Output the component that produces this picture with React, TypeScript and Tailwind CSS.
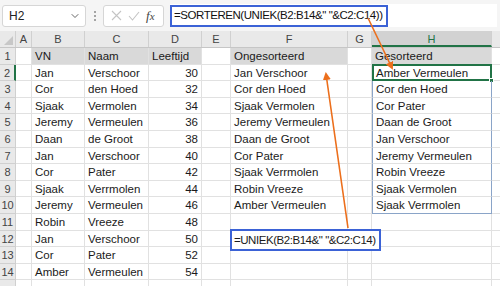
import { ChevronDown } from "lucide-react";

type Row = { vn: string; naam: string; age: number; f?: string; h?: string };

const rows: Row[] = [
  { vn: "Jan", naam: "Verschoor", age: 30, f: "Jan Verschoor", h: "Amber Vermeulen" },
  { vn: "Cor", naam: "den Hoed", age: 32, f: "Cor den Hoed", h: "Cor den Hoed" },
  { vn: "Sjaak", naam: "Vermolen", age: 34, f: "Sjaak Vermolen", h: "Cor Pater" },
  { vn: "Jeremy", naam: "Vermeulen", age: 36, f: "Jeremy Vermeulen", h: "Daan de Groot" },
  { vn: "Daan", naam: "de Groot", age: 38, f: "Daan de Groot", h: "Jan Verschoor" },
  { vn: "Jan", naam: "Verschoor", age: 40, f: "Cor Pater", h: "Jeremy Vermeulen" },
  { vn: "Cor", naam: "Pater", age: 42, f: "Sjaak Verrmolen", h: "Robin Vreeze" },
  { vn: "Sjaak", naam: "Verrmolen", age: 44, f: "Robin Vreeze", h: "Sjaak Vermolen" },
  { vn: "Jeremy", naam: "Vermeulen", age: 46, f: "Amber Vermeulen", h: "Sjaak Verrmolen" },
  { vn: "Robin", naam: "Vreeze", age: 48 },
  { vn: "Jan", naam: "Verschoor", age: 50 },
  { vn: "Cor", naam: "Pater", age: 52 },
  { vn: "Amber", naam: "Vermeulen", age: 54 },
];

const cols = [
  { key: "A", w: "w-[16px]" },
  { key: "B", w: "w-[53px]" },
  { key: "C", w: "w-[64px]" },
  { key: "D", w: "w-[53px]" },
  { key: "E", w: "w-[29px]" },
  { key: "F", w: "w-[117px]" },
  { key: "G", w: "w-[24px]" },
  { key: "H", w: "w-[120px]" },
];

const cell = "h-[16.6px] shrink-0 border-r border-b border-[#e1e1e1] px-[3px] leading-[16px] whitespace-nowrap";
const rowHead = "h-[16.6px] w-[16px] shrink-0 border-b border-[#d0d0d0] bg-[#e9e9e9] text-center text-[11px] leading-[16px] text-[#444]";

const FormulaBar = () => (
  <div className="flex h-[31px] items-center bg-[#f5f5f5] pl-[2px] pr-[3px]">
    <div className="flex h-[22px] w-[84px] items-center justify-between rounded-[3px] border border-[#d6d6d6] bg-white pl-[6px] pr-[4px] text-[12px] text-[#222]">
      <span>H2</span>
      <ChevronDown className="h-[12px] w-[12px] text-[#555]" strokeWidth={1.8} />
    </div>
    <div className="flex w-[17px] flex-col items-center gap-[2px]">
      <span className="h-[2px] w-[2px] rounded-full bg-[#888]" />
      <span className="h-[2px] w-[2px] rounded-full bg-[#888]" />
      <span className="h-[2px] w-[2px] rounded-full bg-[#888]" />
    </div>
    <div className="flex h-[22px] w-[61px] items-center gap-[6px] rounded-[3px] border border-[#d6d6d6] bg-white pl-[7px]">
      <svg width="11" height="11" viewBox="0 0 11 11">
        <path d="M1 1 L10 10 M10 1 L1 10" stroke="#c4c4c4" strokeWidth="1.1" fill="none" />
      </svg>
      <svg width="12" height="10" viewBox="0 0 12 10">
        <path d="M1 5 L4.5 9 L11 1" stroke="#c4c4c4" strokeWidth="1.1" fill="none" />
      </svg>
      <span className="font-['Liberation_Serif',serif] text-[13px] italic text-[#444]">
        f<span className="text-[11px]">x</span>
      </span>
    </div>
    <div className="ml-[6px] flex h-[23px] flex-1 items-center bg-white">
      <div className="flex h-[22px] items-center border-2 border-[#3b62d6] pl-[2px] pr-[3px] text-[11.5px] tracking-[-0.45px] text-[#111]">
        =SORTEREN(UNIEK(B2:B14&amp;" "&amp;C2:C14))
      </div>
    </div>
  </div>
);

const Sheet = () => (
  <div className="flex flex-col bg-white text-[11.5px] text-[#1a1a1a]">
    {/* column letters */}
    <div className="flex h-[17px] border-b border-[#c6c6c6] bg-[#e9e9e9] text-[11px] text-[#444]">
      <div className="relative w-[16px] shrink-0 border-r border-[#d0d0d0]">
        <svg className="absolute bottom-[2px] right-[2px]" width="9" height="9" viewBox="0 0 9 9">
          <path d="M9 0 L9 9 L0 9 Z" fill="#c7c7c7" />
        </svg>
      </div>
      {cols.map((c) => (
        <div
          key={c.key}
          className={`${c.w} shrink-0 border-r border-[#d0d0d0] text-center leading-[16px] ${
            c.key === "H" ? "border-b-2 border-b-[#217346] bg-[#d2d2d2] text-[#217346]" : ""
          }`}
        >
          {c.key}
        </div>
      ))}
      <div className="flex-1" />
    </div>

    {/* header row 1 */}
    <div className="flex">
      <div className={`${rowHead} border-r`}>1</div>
      <div className={`${cell} w-[16px]`} />
      <div className={`${cell} w-[53px] bg-[#d9d9d9]`}>VN</div>
      <div className={`${cell} w-[64px] bg-[#d9d9d9]`}>Naam</div>
      <div className={`${cell} w-[53px] bg-[#d9d9d9]`}>Leeftijd</div>
      <div className={`${cell} w-[29px]`} />
      <div className={`${cell} w-[117px] bg-[#d9d9d9]`}>Ongesorteerd</div>
      <div className={`${cell} w-[24px]`} />
      <div className={`${cell} w-[120px] bg-[#d9d9d9]`}>Gesorteerd</div>
      <div className={`${cell} flex-1 border-r-0`} />
    </div>

    {rows.map((r, i) => {
      const n = i + 2;
      const inSpill = !!r.h;
      const first = n === 2;
      const last = n === 10;
      return (
        <div key={n} className="flex">
          <div className={`${rowHead} ${first ? "border-r-2 border-r-[#217346] bg-[#d2d2d2]" : "border-r"}`}>
            {n}
          </div>
          <div className={`${cell} w-[16px]`} />
          <div className={`${cell} w-[53px]`}>{r.vn}</div>
          <div className={`${cell} w-[64px]`}>{r.naam}</div>
          <div className={`${cell} w-[53px] text-right`}>{r.age}</div>
          <div className={`${cell} w-[29px]`} />
          <div className={`${cell} relative w-[117px]`}>
            {r.f}
            {n === 12 && (
              <div className="absolute left-[-1px] top-[-2px] z-10 flex h-[22px] items-center border-2 border-[#3b62d6] bg-white pl-[2px] pr-[3px] tracking-[-0.45px]">
                =UNIEK(B2:B14&amp;" "&amp;C2:C14)
              </div>
            )}
          </div>
          <div className={`${cell} w-[24px]`} />
          <div
            className={`${cell} relative w-[120px] ${
              inSpill ? "border-l border-l-[#8aa4c8] border-r-[#8aa4c8]" : ""
            } ${last ? "border-b-[#8aa4c8]" : ""}`}
          >
            {r.h}
            {first && (
              <>
                <div className="pointer-events-none absolute inset-[-1px] border-2 border-[#217346]" />
                <div className="absolute bottom-[-3px] right-[-3px] h-[5px] w-[5px] border border-white bg-[#217346]" />
              </>
            )}
          </div>
          <div className={`${cell} flex-1 border-r-0`} />
        </div>
      );
    })}

    {/* partly visible row 15 */}
    <div className="flex">
      <div className="h-[16.6px] w-[16px] shrink-0 border-r border-[#d0d0d0] bg-[#e9e9e9]" />
      {cols.map((c) => (
        <div key={c.key} className={`${c.w} h-[16.6px] shrink-0 border-r border-[#e1e1e1]`} />
      ))}
    </div>
  </div>
);

export default function App() {
  return (
    <div className="relative h-[286px] w-[500px] overflow-hidden bg-white font-['Liberation_Sans',Arial,sans-serif]">
      <FormulaBar />
      <Sheet />
      {/* annotation arrows */}
      <svg className="pointer-events-none absolute left-0 top-0 z-20" width="500" height="286" viewBox="0 0 500 286">
        <defs>
          <marker id="head" markerWidth="8" markerHeight="8" refX="6" refY="4" orient="auto" markerUnits="userSpaceOnUse">
            <path d="M0 0 L8 4 L0 8 Z" fill="#ec6f1c" />
          </marker>
        </defs>
        <line x1="368" y1="18" x2="392" y2="68" stroke="#ec6f1c" strokeWidth="1.6" markerEnd="url(#head)" />
        <line x1="348" y1="228" x2="326" y2="74" stroke="#ec6f1c" strokeWidth="1.6" markerEnd="url(#head)" />
      </svg>
    </div>
  );
}
